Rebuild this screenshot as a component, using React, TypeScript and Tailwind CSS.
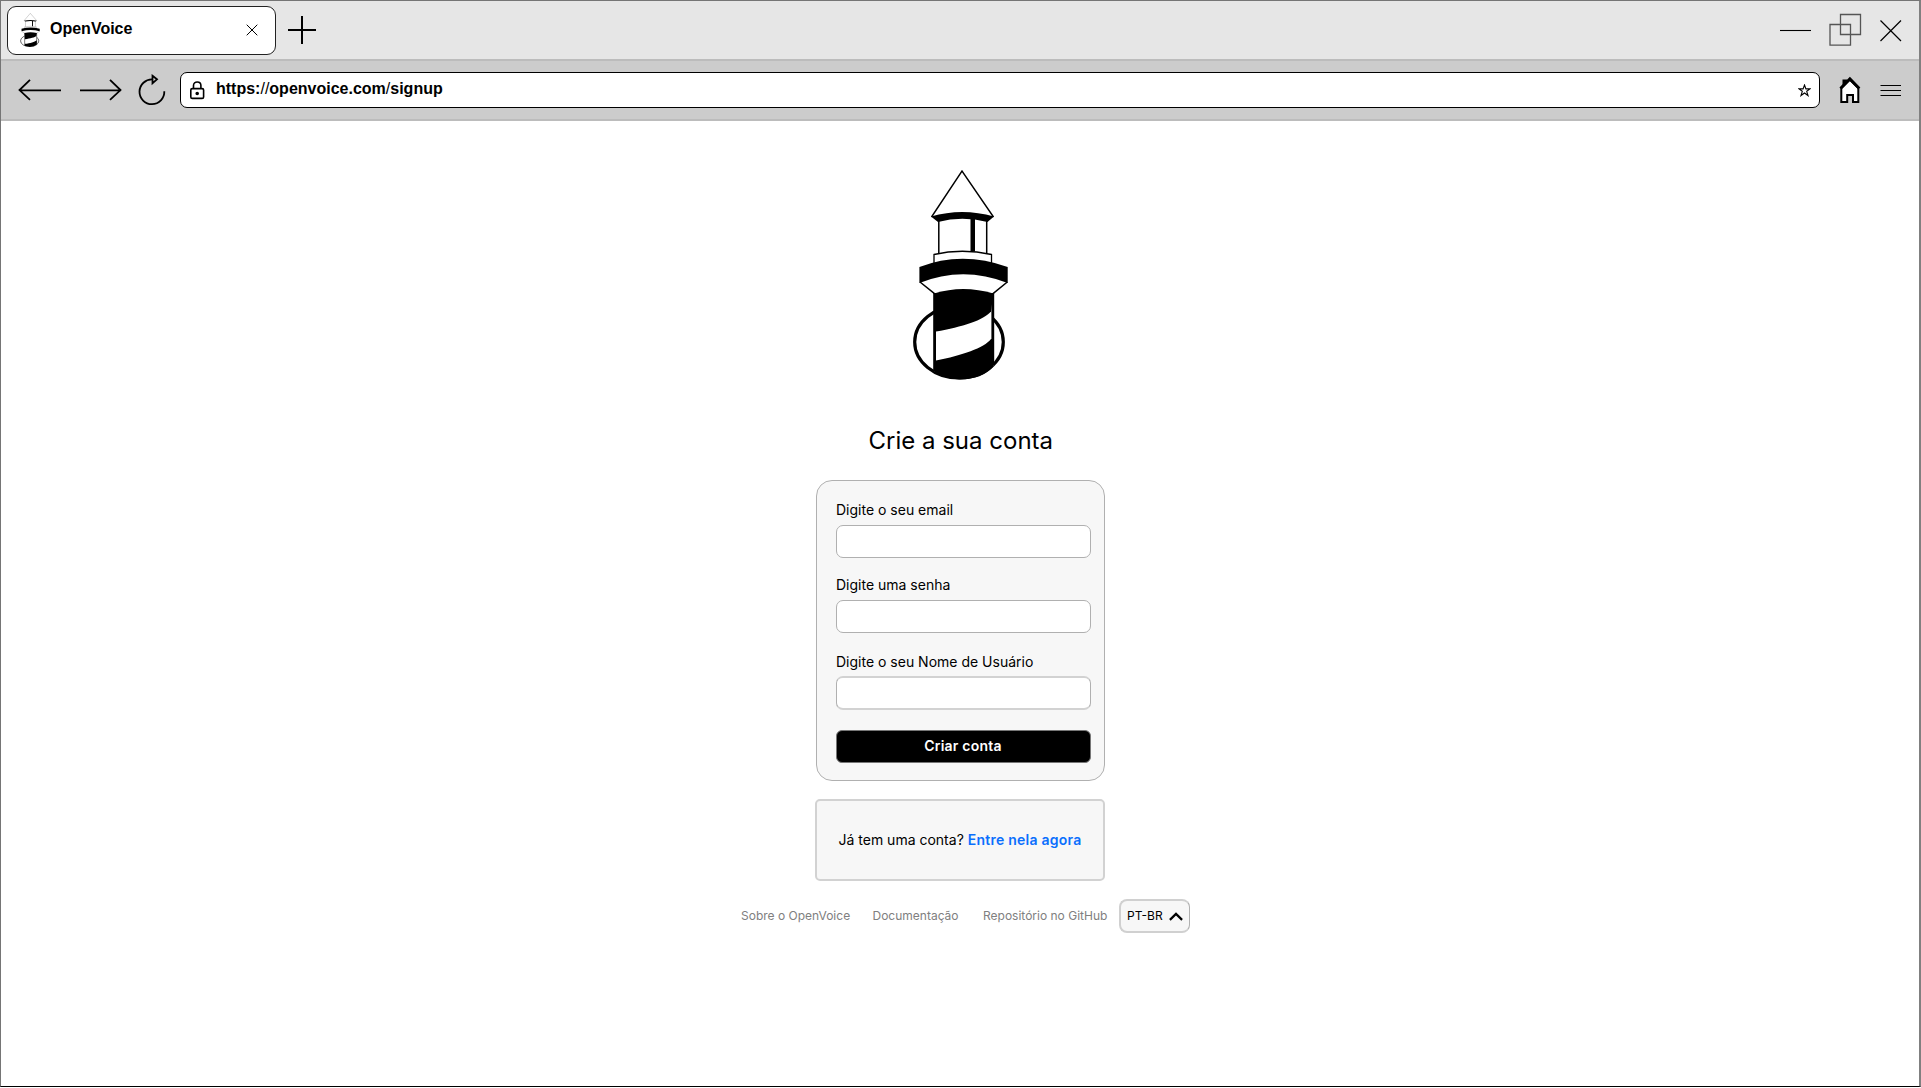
import React from "react";

function Lighthouse({ className, thin = 1 }: { className: string; thin?: number }) {
  return (
    <svg className={className} viewBox="912 169 97 211" preserveAspectRatio="none" fill="none" stroke="#000">
      <ellipse cx="959" cy="342" rx="44.3" ry="36" strokeWidth="3.2" />
      <path d="M934 293.5Q963 284.5 993.5 293.5V366Q982 378 959 378Q945 378 934 371.5Z" fill="#fff" stroke="none" />
      <path d="M934.6 293V371.5M992.8 293V365.5" strokeWidth="2.8" />
      <path d="M934 293.5Q963 284.5 993.5 293.5L991 311.5C984 320 962 327 936 331.5Z" fill="#000" stroke="none" />
      <path d="M936 360.5C962 355.5 984 348 991 339H993.5V366.5Q982 379.4 960 379.4Q945 379 934 372.5Z" fill="#000" stroke="none" />
      <g strokeWidth={thin}>
        <path d="M931.5 217L962 171L993.5 217" strokeWidth={1.4 * thin} />
        <path d="M938.8 220V253.5M986.7 220V253.5" strokeWidth={1.5 * thin} />
        <path d="M934 266V254.5Q962 248 991.5 254.5V266" strokeWidth={1.3 * thin} />
        <path d="M920 282L934.5 293.7M1007.3 282L993 293.7" strokeWidth={1.5 * thin} />
      </g>
      <path d="M931 216.5Q962 207.5 994 216.5L987.5 222Q962 215.5 938 222Z" fill="#000" stroke="none" />
      <path d="M970.5 218H975V251.5H970.5Z" fill="#000" stroke="none" />
      <path d="M919.4 267Q962 250.5 1007.7 267V283Q963 265.5 919.4 283Z" fill="#000" stroke="none" />
    </svg>
  );
}

function TabStrip() {
  return (
    <div className="flex h-[58px] bg-[#e6e6e6] pl-[6px] pt-[5px]">
      <div className="flex h-[49px] w-[269px] rounded-[9px] border border-[#222] bg-white pl-[12px]">
        <Lighthouse className="mt-[6px] h-[34px] w-[20px]" thin={0.7} />
        <span className="ml-[10px] mt-[10px] w-[196px] text-base leading-[24px] font-bold">OpenVoice</span>
        <svg className="mt-[17px] size-[12px]" viewBox="0 0 12 12" stroke="#000" strokeWidth="1">
          <path d="M.7 .7L11.3 11.3M11.3 .7L.7 11.3" />
        </svg>
      </div>
      <svg className="ml-[12px] mt-[10px] size-[28px]" viewBox="0 0 28 28" stroke="#000" strokeWidth="2">
        <path d="M0 14H28M14 0V28" />
      </svg>
      <div className="ml-auto mr-[16px] mt-[7px] flex">
        <svg className="h-[34px] w-[124px]" viewBox="1779 13 124 34" fill="none" stroke="#333" strokeWidth="1.1">
          <path d="M1780 30.5H1811" stroke="#000" />
          <path d="M1840.5 14.5H1860.5V34.5H1840.5ZM1830 24.5H1850.5V45.2H1830Z" stroke="#555" strokeWidth="1.3" />
          <path d="M1880.5 20.5L1901 41M1901 20.5L1880.5 41" stroke="#000" strokeWidth="1.2" />
        </svg>
      </div>
    </div>
  );
}

function NavBar() {
  return (
    <div className="flex h-[58px] bg-[#ccc] pl-[17px] pt-[11px]">
      <svg className="h-[36px] w-[150px]" viewBox="18 72 150 36" fill="none" stroke="#000" strokeWidth="1.8">
        <path d="M61 90.3H19.5M30 79.8L19.5 90.1L30 99.8" />
        <path d="M80 90.3H121M110 79.8L120.500 90.1L110 99.8" />
        <path d="M152.500 79.400A12.400 12.400 0 1 0 164.300 91.300" />
        <path d="M152.500 75.800L157 79.400L152.500 83.300Z" />
      </svg>
      <div className="ml-[12px] flex h-[36px] w-[1640px] rounded-[7px] border border-black bg-white pl-[9px]">
        <svg className="mt-[8px] h-[19px] w-[15px]" viewBox="0 0 15 19" fill="none" stroke="#000" strokeWidth="1.6">
          <rect x=".8" y="7.600" width="12.800" height="9.800" rx="1.500" />
          <path d="M3.500 7.600V4.400C3.500 -.2 10.900 -.2 10.900 4.400V7.600" />
          <circle cx="7.200" cy="12.500" r="1" fill="#000" />
        </svg>
        <span className="ml-[11px] mt-[4px] text-base leading-[24px] font-bold">
          https:<span className="font-normal">//</span>openvoice.com<span className="font-normal">/</span>signup
        </span>
        <svg className="ml-auto mr-[8px] mt-[11px] size-[13px]" viewBox="0 0 13 13" fill="none" stroke="#000" strokeWidth="1.1">
          <path d="M6.500 1L7.900 4.900H12L8.700 7.300L10 11.500L6.500 9L3 11.500L4.300 7.300L1 4.900H5.100Z" />
        </svg>
      </div>
      <svg className="ml-[19px] mt-[4px] h-[28px] w-[64px]" viewBox="1839 76 64 28" fill="none" stroke="#000">
        <path d="M1842.500 87V79.500H1847V84Z" fill="#000" stroke="none" />
        <path d="M1841.300 102V88L1849.800 79.500L1858.300 88V102H1853V95H1847.200V102Z" fill="#fff" strokeWidth="2" />
        <path d="M1840.500 88.500L1849.900 79L1859.300 88.500" strokeWidth="3" />
        <path d="M1880.500 85.500H1901M1880.500 90.500H1901M1880.500 95.500H1901" strokeWidth="1" />
      </svg>
    </div>
  );
}

function Field({ label, className, input }: { label: string; className: string; input: string }) {
  return (
    <label className={`block text-sm ${className}`}>
      <span className="block h-[25px] pl-[0.5px] leading-5">{label}</span>
      <input className={`block w-[255px] rounded-[7px] border bg-white px-2 outline-none ${input}`} />
    </label>
  );
}

export default function App() {
  return (
    <div className="flex h-[1088px] w-[1921px] flex-col bg-white pb-px font-['Liberation_Sans',sans-serif] text-black">
      <div className="flex min-h-0 flex-1 flex-col border-t border-r-2 border-b border-l border-t-[#757575] border-r-[#808080] border-b-black border-l-[#757575]">
        <TabStrip />
        <div className="h-[2px] bg-[#bcbcbc]" />
        <NavBar />
        <div className="h-[2px] bg-[#bcbcbc]" />
        <main className="flex flex-col items-center font-['Inter',sans-serif]">
          <Lighthouse className="mt-[48px] h-[211px] w-[97px]" />
          <h1 className="mt-[45px] pl-[1.5px] text-2xl leading-8">Crie a sua conta</h1>
          <form className="mt-[23px] h-[301px] w-[289px] rounded-[16px] border border-[#b0b0b0] bg-[#f7f7f7] pl-[19px] pt-[19px]">
            <Field label="Digite o seu email" className="h-[75px]" input="h-[33px] border-[#b0b0b0]" />
            <Field label="Digite uma senha" className="h-[77px]" input="h-[33px] border-[#b0b0b0]" />
            <Field
              label="Digite o seu Nome de Usuário"
              className="h-[78px] [&>span]:h-[24px]"
              input="h-[34px] border-y-2 border-x-[#b0b0b0] border-y-[#d2d2d2]"
            />
            <button type="button" className="block h-[33px] w-[255px] rounded-[6px] border border-[#777] bg-black pb-[2px] text-sm font-semibold tracking-[0.2px] text-white">
              Criar conta
            </button>
          </form>
          <div className="mt-[18px] flex h-[82px] w-[290px] items-center justify-center rounded-[5px] border-2 border-[#d2d2d2] bg-[#f7f7f7] text-sm">
            <p>
              Já tem uma conta? <a className="font-semibold tracking-[0.24px] text-[#0a6ffd]">Entre nela agora</a>
            </p>
          </div>
          <footer className="mt-[18px] ml-[11px] flex h-[34px] items-center text-xs text-[#808080]">
            <a className="w-[131.500px]">Sobre o OpenVoice</a>
            <a className="w-[110.500px]">Documentação</a>
            <a className="w-[136px]">Repositório no GitHub</a>
            <button type="button" className="flex h-[34px] w-[71px] items-center rounded-[8px] border-2 border-r border-[#d0d0d0] border-r-[#b0b0b0] bg-[#f7f7f7] pl-[6px] text-black">
              PT-BR
              <svg className="ml-[6px] h-[9px] w-[14px]" viewBox="0 0 14 9" fill="none" stroke="#000" strokeWidth="2.200">
                <path d="M.9 7.900L7 1.900L13.100 7.900" />
              </svg>
            </button>
          </footer>
        </main>
      </div>
    </div>
  );
}
